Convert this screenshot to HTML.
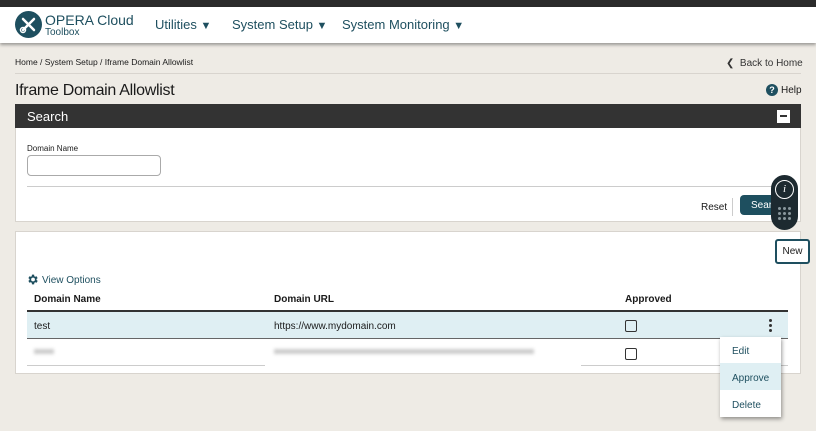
<!DOCTYPE html>
<html><head><style>
*{box-sizing:border-box;margin:0;padding:0}
body{width:816px;height:431px;overflow:hidden;background:#eeebe5;font-family:"Liberation Sans",sans-serif;color:#1a1a1a;position:relative;font-size:11px}
.abs{position:absolute}
.dot{position:absolute;width:3px;height:3px;border-radius:50%;background:#8a979d}
</style></head><body>
<div class="abs" style="left:0;top:0;width:816px;height:7px;background:#2b2b2b"></div>
<div class="abs" style="left:0;top:7px;width:816px;height:36px;background:#fff;box-shadow:0 2px 3px rgba(0,0,0,.35)"></div>
<div class="abs" style="left:15px;top:11px;width:27px;height:27px;border-radius:50%;background:#1e4f5f"></div>
<svg class="abs" style="left:15px;top:11px" width="27" height="27" viewBox="0 0 27 27"><path d="M8 8l11 11M19 8l-11 11" stroke="#fff" stroke-width="2.5" stroke-linecap="round"/><circle cx="8" cy="19" r="2.5" fill="none" stroke="#fff" stroke-width="1.5"/></svg>
<div class="abs" style="left:45px;top:12px;font-size:14px;color:#1e4f5f">OPERA Cloud</div>
<div class="abs" style="left:45px;top:27px;font-size:10px;color:#1e4f5f">Toolbox</div>
<div class="abs" style="left:155px;top:17px;font-size:13px;color:#1e4f5f">Utilities <span style="font-size:11px">▼</span></div>
<div class="abs" style="left:232px;top:17px;font-size:13px;color:#1e4f5f">System Setup <span style="font-size:11px">▼</span></div>
<div class="abs" style="left:342px;top:17px;font-size:13px;color:#1e4f5f">System Monitoring <span style="font-size:11px">▼</span></div>
<div class="abs" style="left:15px;top:57px;font-size:8.5px">Home / System Setup / Iframe Domain Allowlist</div>
<div class="abs" style="left:15px;top:73px;width:786px;height:1px;background:#d8d4ce"></div>
<div class="abs" style="left:726px;top:58px;font-size:10px;color:#333">❮&nbsp; Back to Home</div>
<div class="abs" style="left:15px;top:82px;font-size:16px;letter-spacing:-0.3px">Iframe Domain Allowlist</div>
<div class="abs" style="left:766px;top:84px;width:12px;height:12px;border-radius:50%;background:#1e4f5f;color:#fff;font-size:9px;font-weight:bold;text-align:center;line-height:12px">?</div>
<div class="abs" style="left:781px;top:85px;font-size:10px">Help</div>
<div class="abs" style="left:15px;top:104px;width:786px;height:24px;background:#333"></div>
<div class="abs" style="left:27px;top:109px;font-size:13px;color:#fff">Search</div>
<div class="abs" style="left:777px;top:110px;width:13px;height:13px;background:#fff"><div style="margin:5px 3px;width:7px;height:2px;background:#333"></div></div>
<div class="abs" style="left:15px;top:128px;width:786px;height:94px;background:#fff;border:1px solid #d8d4ce;border-top:none"></div>
<div class="abs" style="left:27px;top:144px;font-size:8px">Domain Name</div>
<div class="abs" style="left:27px;top:155px;width:134px;height:21px;border:1px solid #aaa;border-radius:4px;background:#fff"></div>
<div class="abs" style="left:27px;top:186px;width:762px;height:1px;background:#ccc"></div>
<div class="abs" style="left:701px;top:202px;font-size:10px">Reset</div>
<div class="abs" style="left:732px;top:198px;width:1px;height:18px;background:#ccc"></div>
<div class="abs" style="left:740px;top:195px;width:50px;height:20px;background:#1e4f5f;border-radius:4px;color:#fff;font-size:10px;padding:5px 11px">Search</div>
<div class="abs" style="left:15px;top:231px;width:786px;height:143px;background:#fff;border:1px solid #d8d4ce"></div>
<svg class="abs" style="left:26px;top:273px" width="13" height="13" viewBox="0 0 24 24"><path fill="#1e4f5f" d="M19.4 13a7.5 7.5 0 000-2l2.1-1.6-2-3.5-2.5 1a7.6 7.6 0 00-1.7-1L15 3h-4l-.4 2.9a7.6 7.6 0 00-1.7 1l-2.5-1-2 3.5L6.5 11a7.5 7.5 0 000 2l-2.1 1.6 2 3.5 2.5-1a7.6 7.6 0 001.7 1L11 21h4l.4-2.9a7.6 7.6 0 001.7-1l2.5 1 2-3.5zM13 15.5a3.5 3.5 0 110-7 3.5 3.5 0 010 7z"/></svg>
<div class="abs" style="left:42px;top:275px;font-size:10px;color:#1e4f5f">View Options</div>
<div class="abs" style="left:34px;top:294px;font-size:10px;font-weight:bold">Domain Name</div>
<div class="abs" style="left:274px;top:294px;font-size:10px;font-weight:bold">Domain URL</div>
<div class="abs" style="left:625px;top:294px;font-size:10px;font-weight:bold">Approved</div>
<div class="abs" style="left:27px;top:310px;width:761px;height:2px;background:#333"></div>
<div class="abs" style="left:27px;top:312px;width:761px;height:27px;background:#dfeff3;border-bottom:1px solid #666"></div>
<div class="abs" style="left:34px;top:321px;font-size:10px">test</div>
<div class="abs" style="left:274px;top:321px;font-size:10px">https://www.mydomain.com</div>
<div class="abs" style="left:625px;top:320px;width:12px;height:12px;border:1.5px solid #333;border-radius:2px"></div>
<div class="abs" style="left:769px;top:319px;width:3px;height:3px;border-radius:50%;background:#333"></div>
<div class="abs" style="left:769px;top:324px;width:3px;height:3px;border-radius:50%;background:#333"></div>
<div class="abs" style="left:769px;top:329px;width:3px;height:3px;border-radius:50%;background:#333"></div>
<div class="abs" style="left:27px;top:365px;width:761px;height:1px;background:#ccc"></div>
<div class="abs" style="left:34px;top:349px;width:20px;height:5px;background:#ccc;filter:blur(1.5px)"></div>
<div class="abs" style="left:274px;top:349px;width:260px;height:5px;background:#ccc;filter:blur(1.5px)"></div>
<div class="abs" style="left:265px;top:365px;width:316px;height:3px;background:#fff"></div>
<div class="abs" style="left:625px;top:348px;width:12px;height:12px;border:1.5px solid #333;border-radius:2px"></div>
<div class="abs" style="left:720px;top:337px;width:61px;height:80px;background:#fff;box-shadow:1px 2px 4px rgba(0,0,0,.4)"></div>
<div class="abs" style="left:720px;top:363px;width:61px;height:27px;background:#dfeff3"></div>
<div class="abs" style="left:732px;top:346px;font-size:10px;color:#1e4f5f">Edit</div>
<div class="abs" style="left:732px;top:373px;font-size:10px;color:#1e4f5f">Approve</div>
<div class="abs" style="left:732px;top:400px;font-size:10px;color:#1e4f5f">Delete</div>
<div class="abs" style="left:771px;top:175px;width:27px;height:55px;background:#1d2a30;border-radius:14px"></div>
<div class="abs" style="left:775px;top:180px;width:19px;height:19px;border:1.5px solid #fff;border-radius:50%;color:#fff;font-size:11px;font-style:italic;font-family:'Liberation Serif',serif;text-align:center;line-height:17px">i</div>
<div class="dot" style="left:778px;top:207px"></div><div class="dot" style="left:783px;top:207px"></div><div class="dot" style="left:788px;top:207px"></div>
<div class="dot" style="left:778px;top:212px"></div><div class="dot" style="left:783px;top:212px"></div><div class="dot" style="left:788px;top:212px"></div>
<div class="dot" style="left:778px;top:217px"></div><div class="dot" style="left:783px;top:217px"></div><div class="dot" style="left:788px;top:217px"></div>
<div class="abs" style="left:775px;top:239px;width:35px;height:25px;background:#fff;border:2px solid #1e4f5f;border-radius:3px;font-size:10px;text-align:center;line-height:21px">New</div>
</body></html>
